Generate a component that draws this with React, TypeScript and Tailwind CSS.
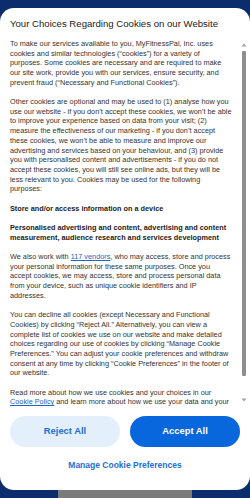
import React from 'react';

const link = 'text-[#1f63c6] underline';

function Lines({ lines, className = '' }: { lines: React.ReactNode[]; className?: string }) {
  return (
    <p className={className}>
      {lines.map((l, i) => (
        <span key={i} className="block whitespace-nowrap">
          {l}
        </span>
      ))}
    </p>
  );
}

function ScrollBar() {
  return (
    <div className="flex-1 flex flex-col items-center pt-[4px] pb-[5px]">
      <svg width="6" height="4" viewBox="0 0 6 4" className="shrink-0">
        <path d="M3 0.5 L5.5 3.5 L0.5 3.5 Z" fill="#a3a3a3" />
      </svg>
      <div className="mt-[4px] w-[4px] h-[325px] bg-[#8e8e8e] rounded-[1px]" />
      <div className="flex-1" />
      <svg width="6" height="4" viewBox="0 0 6 4" className="shrink-0">
        <path d="M0.5 0.5 L5.5 0.5 L3 3.5 Z" fill="#a3a3a3" />
      </svg>
    </div>
  );
}

export default function App() {
  return (
    <div
      className="w-[250px] h-[498px] bg-[#0b2d6d] flex flex-col overflow-hidden pt-[8px]"
      style={{ fontFamily: '"Liberation Sans", Arial, sans-serif' }}
    >
      <div className="h-[482px] bg-white rounded-[14px] flex flex-col shrink-0">
        <h1 className="px-[10px] pt-[9px] text-[9.6px] leading-[14px] text-[#222] font-normal">
          Your Choices Regarding Cookies on our Website
        </h1>

        <div className="mt-[8px] h-[368px] flex pl-[10px]">
          <div className="w-[228px] overflow-hidden text-[7.3px] leading-[9.68px] text-[#333] space-y-[9.68px]">
            <Lines
              lines={[
                'To make our services available to you, MyFitnessPal, Inc. uses',
                'cookies and similar technologies (“cookies”) for a variety of',
                'purposes. Some cookies are necessary and are required to make',
                'our site work, provide you with our services, ensure security, and',
                'prevent fraud (“Necessary and Functional Cookies”).',
              ]}
            />
            <Lines
              lines={[
                'Other cookies are optional and may be used to (1) analyse how you',
                'use our website - if you don’t accept these cookies, we won’t be able',
                'to improve your experience based on data from your visit; (2)',
                'measure the effectiveness of our marketing - if you don’t accept',
                'these cookies, we won’t be able to measure and improve our',
                'advertising and services based on your behaviour, and (3) provide',
                'you with personalised content and advertisements - if you do not',
                'accept these cookies, you will still see online ads, but they will be',
                'less relevant to you. Cookies may be used for the following',
                'purposes:',
              ]}
            />
            <Lines className="font-bold text-[#222]" lines={['Store and/or access information on a device']} />
            <Lines
              className="font-bold text-[#222]"
              lines={[
                'Personalised advertising and content, advertising and content',
                'measurement, audience research and services development',
              ]}
            />
            <Lines
              lines={[
                <>
                  We also work with <span className={link}>117 vendors</span>, who may access, store and process
                </>,
                'your personal information for these same purposes. Once you',
                'accept cookies, we may access, store and process personal data',
                'from your device, such as unique cookie identifiers and IP',
                'addresses.',
              ]}
            />
            <Lines
              lines={[
                'You can decline all cookies (except Necessary and Functional',
                'Cookies) by clicking “Reject All.” Alternatively, you can view a',
                'complete list of cookies we use on our website and make detailed',
                'choices regarding our use of cookies by clicking “Manage Cookie',
                'Preferences.” You can adjust your cookie preferences and withdraw',
                'consent at any time by clicking “Cookie Preferences” in the footer of',
                'our website.',
              ]}
            />
            <Lines
              lines={[
                'Read more about how we use cookies and your choices in our',
                <>
                  <span className={link}>Cookie Policy</span> and learn more about how we use your data and your
                </>,
              ]}
            />
          </div>
          <ScrollBar />
        </div>

        <div className="mt-[9px] px-[10px] flex gap-[10px]">
          <button className="flex-1 h-[31px] rounded-full bg-[#e3f0fc] text-[#1c6ed6] text-[9.4px] font-bold">
            Reject All
          </button>
          <button className="flex-1 h-[31px] rounded-full bg-[#0867dc] text-white text-[9.4px] font-bold">
            Accept All
          </button>
        </div>

        <div className="mt-[12px] text-center text-[8.5px] leading-[12px] font-bold text-[#1c6ed6]">
          Manage Cookie Preferences
        </div>
      </div>

      <div className="flex h-[8px] shrink-0">
        <div className="w-[58px]" />
        <div className="w-[134px] bg-[#7b7b7b]" />
      </div>
    </div>
  );
}
